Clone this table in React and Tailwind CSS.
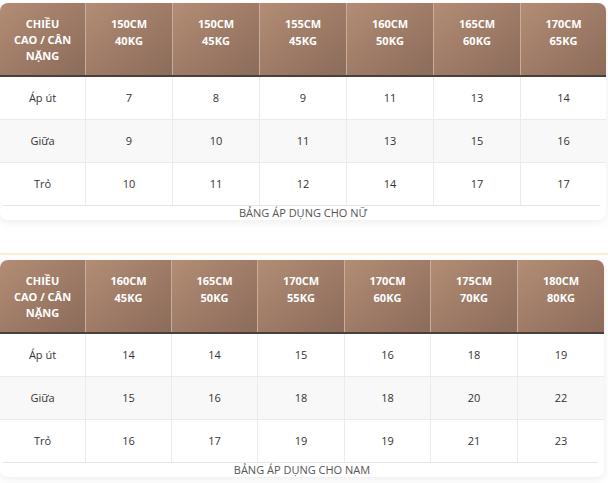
const tables = [
  {
    heads: [["150CM", "40KG"], ["150CM", "45KG"], ["155CM", "45KG"], ["160CM", "50KG"], ["165CM", "60KG"], ["170CM", "65KG"]],
    rows: [
      ["Áp út", 7, 8, 9, 11, 13, 14],
      ["Giữa", 9, 10, 11, 13, 15, 16],
      ["Trỏ", 10, 11, 12, 14, 17, 17],
    ],
    caption: "BẢNG ÁP DỤNG CHO NỮ",
    width: "w-[606px]",
    cols: "grid-cols-[85px_87px_87px_87px_87px_87px_1fr]",
  },
  {
    heads: [["160CM", "45KG"], ["165CM", "50KG"], ["170CM", "55KG"], ["170CM", "60KG"], ["175CM", "70KG"], ["180CM", "80KG"]],
    rows: [
      ["Áp út", 14, 14, 15, 16, 18, 19],
      ["Giữa", 15, 16, 18, 18, 20, 22],
      ["Trỏ", 16, 17, 19, 19, 21, 23],
    ],
    caption: "BẢNG ÁP DỤNG CHO NAM",
    width: "w-[604px]",
    cols: "grid-cols-[85px_86px_86px_87px_86px_87px_1fr]",
  },
];

function SizeTable({ t }) {
  return (
    <div className={`${t.width} bg-white rounded-lg shadow-[0_2px_8px_rgba(0,0,0,0.08)] overflow-hidden`}>
      <div className={`grid ${t.cols} border-b-2 border-[#4a403b]`}>
        <div className="h-[72px] pt-[13px] text-center text-[11px] leading-[16px] font-bold text-white bg-gradient-to-br from-[#b38d75] to-[#8b6b5a]">
          CHIỀU
          <br />
          CAO / CÂN
          <br />
          NẶNG
        </div>
        {t.heads.map((h, i) => (
          <div key={i} className="h-[72px] pt-[12px] text-center text-[11px] leading-[17px] font-bold text-white bg-gradient-to-br from-[#b38d75] to-[#8b6b5a] border-l border-[#c9ad9a]">
            {h[0]}
            <br />
            {h[1]}
          </div>
        ))}
      </div>
      {t.rows.map((r, ri) => (
        <div key={ri} className={`grid ${t.cols} ${ri === 1 ? "bg-[#f8f8f8]" : "bg-white"} ${ri < 2 ? "border-b border-[#ebebeb]" : ""}`}>
          {r.map((c, ci) => (
            <div key={ci} className={`h-[42px] flex items-center justify-center text-[11px] text-[#333] ${ci > 0 ? "border-l border-[#ebebeb]" : ""}`}>
              {c}
            </div>
          ))}
        </div>
      ))}
      <div className="ml-[3px] mr-[6px] border-t border-[#e6e6e6]"></div>
      <div className="h-[14px] text-center text-[11px] leading-[14px] text-[#555]">{t.caption}</div>
    </div>
  );
}

export default function App() {
  return (
    <div className="w-[608px] h-[483px] bg-white pt-[3px] overflow-hidden" style={{ fontFamily: "'Open Sans', 'Liberation Sans', sans-serif" }}>
      <SizeTable t={tables[0]} />
      <div className="h-[33px]"></div>
      <div className="h-[2px] bg-[#fcefd5]"></div>
      <div className="h-[5px]"></div>
      <SizeTable t={tables[1]} />
    </div>
  );
}
